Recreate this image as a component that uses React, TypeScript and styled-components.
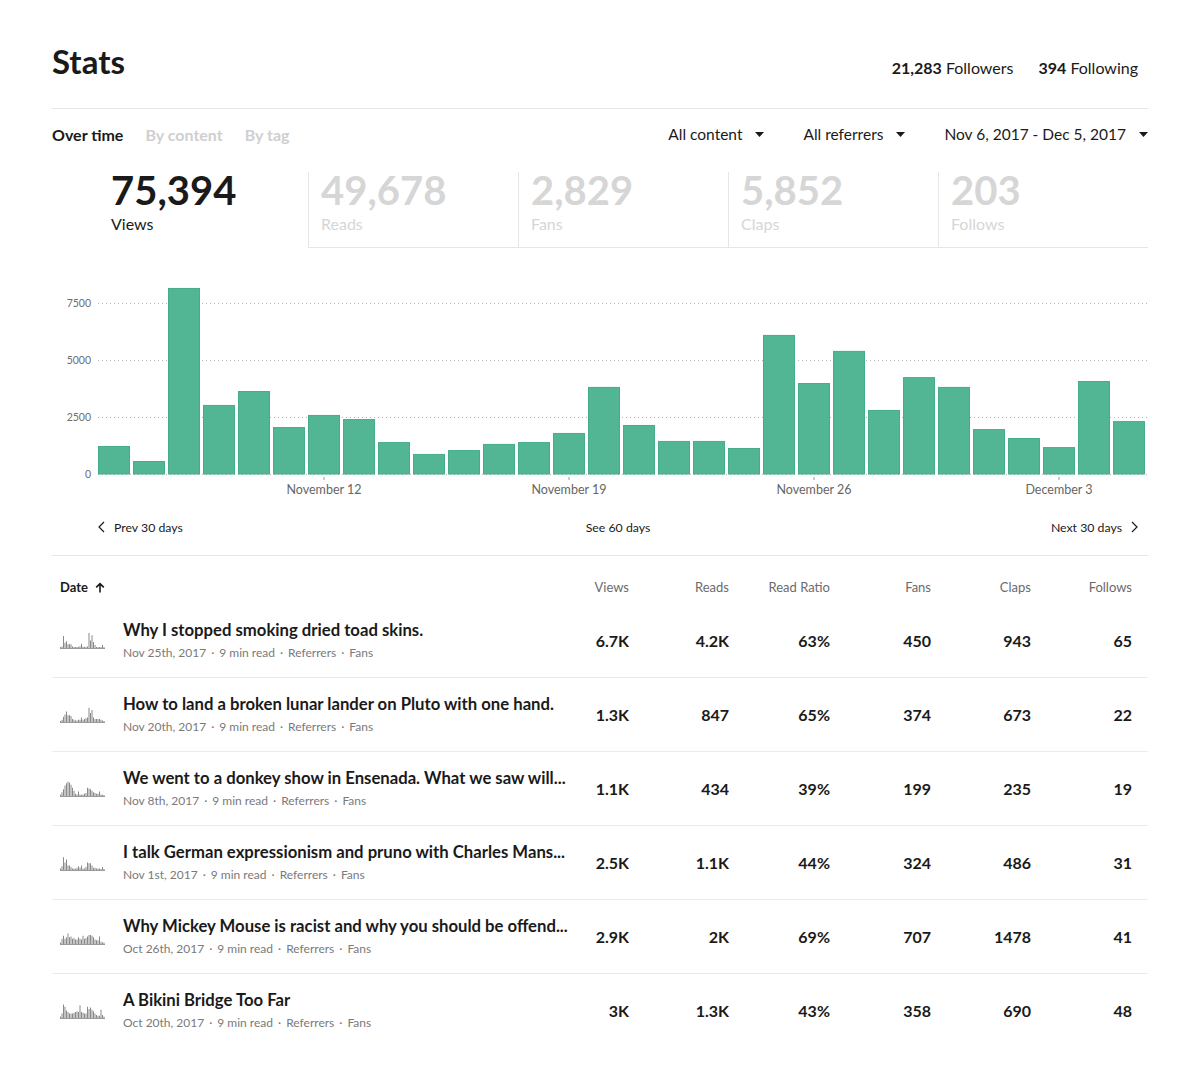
import React from "react";
import styled, { createGlobalStyle } from "styled-components";

const GlobalStyle = createGlobalStyle`
  html, body { margin: 0; padding: 0; background: #fff; }
  body {
    font-family: Lato, "Open Sans", sans-serif;
    color: #1a1a1a;
    -webkit-font-smoothing: antialiased;
  }
`;

const Page = styled.div`
  width: 1096px;
  padding: 0 52px 28px;
`;

/* ---------- header ---------- */

const Header = styled.header`
  display: flex;
  justify-content: space-between;
  align-items: baseline;
  padding-top: 41px;
  height: 67px;
  border-bottom: 1px solid #e6e6e6;
`;

const Title = styled.h1`
  margin: 0;
  font-size: 33px;
  line-height: 40px;
  font-weight: 700;
`;

const Follow = styled.div`
  display: flex;
  gap: 25px;
  margin-right: 10px;
  font-size: 16px;
  line-height: 20px;
  b { font-weight: 700; }
`;

/* ---------- toolbar ---------- */

const Toolbar = styled.div`
  display: flex;
  justify-content: space-between;
  align-items: center;
  height: 50px;
`;

const Tabs = styled.nav`
  display: flex;
  gap: 22px;
`;

const Tab = styled.span<{ $active?: boolean }>`
  font-size: 16px;
  font-weight: 700;
  color: ${(p) => (p.$active ? "#1a1a1a" : "#cfcfcf")};
`;

const Filters = styled.div`
  display: flex;
  gap: 39px;
`;

const Filter = styled.div`
  display: flex;
  align-items: center;
  gap: 13px;
  font-size: 15.5px;
`;

const Caret = () => (
  <svg width="9" height="5" viewBox="0 0 9 5">
    <path d="M0 0h9L4.5 5z" fill="#1a1a1a" />
  </svg>
);

/* ---------- summary tiles ---------- */

const Tiles = styled.div`
  display: flex;
  margin: 13px 0 0 46px;
`;

const Tile = styled.div<{ $active?: boolean }>`
  width: 210px;
  box-sizing: border-box;
  padding: 0 12px 13px;
  border-left: 1px solid ${(p) => (p.$active ? "transparent" : "#e6e6e6")};
  border-bottom: 1px solid ${(p) => (p.$active ? "transparent" : "#e6e6e6")};
  color: ${(p) => (p.$active ? "#1a1a1a" : "#d6d6d6")};
`;

const TileValue = styled.div`
  font-size: 40px;
  line-height: 36px;
  font-weight: 700;
`;

const TileLabel = styled.div`
  margin-top: 6px;
  font-size: 16px;
  line-height: 20px;
`;

/* ---------- chart ---------- */

const ChartSvg = styled.svg`
  display: block;
  margin-top: 14px;
  font-family: Lato, "Open Sans", sans-serif;
`;

const NavRow = styled.div`
  display: grid;
  grid-template-columns: 1fr auto 1fr;
  align-items: center;
  height: 40px;
  padding: 0 10px 8px 46px;
  border-bottom: 1px solid #e6e6e6;
  font-size: 12.3px;
`;

const NavLink = styled.span<{ $end?: boolean }>`
  display: flex;
  align-items: center;
  gap: 9px;
  justify-self: ${(p) => (p.$end ? "end" : "start")};
`;

const Chevron = ({ dir }: { dir: "left" | "right" }) => (
  <svg width="7" height="12" viewBox="0 0 7 12">
    <polyline
      points={dir === "left" ? "6,1 1,6 6,11" : "1,1 6,6 1,11"}
      fill="none"
      stroke="#1a1a1a"
      strokeWidth="1.2"
    />
  </svg>
);

/* ---------- table ---------- */

const COLS = "1fr 56px 100px 101px 101px 100px 101px";

const HeadRow = styled.div`
  display: grid;
  grid-template-columns: ${COLS};
  padding: 23px 16px 9px 8px;
  font-size: 13px;
  line-height: 16px;
  color: #6b6b6b;
`;

const HeadDate = styled.span`
  display: flex;
  align-items: center;
  gap: 7px;
  font-weight: 700;
  color: #1a1a1a;
`;

const HeadCell = styled.span`
  text-align: right;
`;

const Row = styled.div<{ $last?: boolean }>`
  display: grid;
  grid-template-columns: ${COLS};
  align-items: center;
  height: 73px;
  padding: 0 16px 0 8px;
  border-bottom: 1px solid ${(p) => (p.$last ? "transparent" : "#ebebeb")};
`;

const Story = styled.div`
  display: flex;
  align-items: center;
  gap: 18px;
  min-width: 0;
`;

const StoryText = styled.div`
  min-width: 0;
  flex: 1;
`;

const StoryTitle = styled.div`
  font-size: 16.7px;
  line-height: 20px;
  font-weight: 700;
  white-space: nowrap;
  overflow: hidden;
  text-overflow: ellipsis;
`;

const Meta = styled.div`
  display: flex;
  gap: 5px;
  margin-top: 4px;
  font-size: 12px;
  line-height: 17px;
  color: #7a7a7a;
`;

const Num = styled.span`
  text-align: right;
  font-size: 16px;
  font-weight: 700;
`;

/* ---------- data ---------- */

const dailyViews = [
  1230, 570, 8160, 3030, 3640, 2060, 2590, 2410, 1400, 880, 1050, 1320, 1400,
  1800, 3820, 2150, 1450, 1450, 1140, 6100, 3990, 5400, 2810, 4250, 3820, 1970,
  1580, 1180, 4080, 2320,
];

const stories = [
  {
    title: "Why I stopped smoking dried toad skins.",
    date: "Nov 25th, 2017",
    nums: ["6.7K", "4.2K", "63%", "450", "943", "65"],
    spark: [0.05, 0.1, 0.8, 0.35, 0.45, 0.25, 0.25, 0.25, 0.1, 0.06, 0.05, 0.06, 0.08, 0.12, 0.28, 0.1, 0.06, 0.08, 0.1, 1, 0.5, 0.85, 0.4, 0.2, 0.06, 0.05, 0.05, 0.05, 0.2, 0.05],
  },
  {
    title: "How to land a broken lunar lander on Pluto with one hand.",
    date: "Nov 20th, 2017",
    nums: ["1.3K", "847", "65%", "374", "673", "22"],
    spark: [0.05, 0.15, 0.35, 0.5, 0.7, 0.45, 0.45, 0.4, 0.2, 0.15, 0.1, 0.1, 0.15, 0.15, 0.3, 0.15, 0.2, 0.25, 0.3, 0.95, 0.6, 0.8, 0.3, 0.2, 0.2, 0.2, 0.2, 0.15, 0.1, 0.05],
  },
  {
    title: "We went to a donkey show in Ensenada. What we saw will...",
    date: "Nov 8th, 2017",
    nums: ["1.1K", "434", "39%", "199", "235", "19"],
    spark: [0.1, 0.25, 0.45, 0.7, 0.85, 0.95, 0.9, 0.75, 0.55, 0.35, 0.15, 0.1, 0.3, 0.1, 0.08, 0.1, 0.15, 0.2, 0.55, 0.5, 0.45, 0.35, 0.25, 0.2, 0.15, 0.15, 0.3, 0.1, 0.08, 0.05],
  },
  {
    title: "I talk German expressionism and pruno with Charles Mans...",
    date: "Nov 1st, 2017",
    nums: ["2.5K", "1.1K", "44%", "324", "486", "31"],
    spark: [0.1, 0.25, 0.85, 0.5, 0.7, 0.3, 0.3, 0.2, 0.1, 0.1, 0.08, 0.15, 0.25, 0.15, 0.3, 0.1, 0.1, 0.2, 0.5, 0.45, 0.45, 0.3, 0.15, 0.15, 0.1, 0.1, 0.1, 0.05, 0.2, 0.05],
  },
  {
    title: "Why Mickey Mouse is racist and why you should be offend...",
    date: "Oct 26th, 2017",
    nums: ["2.9K", "2K", "69%", "707", "1478", "41"],
    spark: [0.1, 0.35, 0.55, 0.35, 0.45, 0.7, 0.45, 0.5, 0.35, 0.4, 0.3, 0.3, 0.45, 0.35, 0.3, 0.55, 0.35, 0.4, 0.5, 0.6, 0.6, 0.55, 0.45, 0.3, 0.25, 0.25, 0.5, 0.15, 0.1, 0.1],
  },
  {
    title: "A Bikini Bridge Too Far",
    date: "Oct 20th, 2017",
    nums: ["3K", "1.3K", "43%", "358", "690", "48"],
    spark: [0.1, 0.3, 0.9, 0.75, 0.5, 0.4, 0.3, 0.3, 0.3, 0.35, 0.4, 0.45, 0.4, 0.85, 0.4, 0.35, 0.3, 0.3, 0.75, 0.6, 0.7, 0.55, 0.45, 0.3, 0.2, 0.15, 0.15, 0.55, 0.2, 0.1],
  },
];

/* ---------- drawings ---------- */

const Sparkline = ({ values }: { values: number[] }) => (
  <svg width="45" height="17" viewBox="0 0 45 17" style={{ flex: "none" }}>
    {values.map((v, i) => {
      const h = Math.max(1, v * 15);
      return <rect key={i} x={i * 1.5} y={16 - h} width="1" height={h} fill="#8a8a8a" />;
    })}
    <rect x="0" y="16" width="45" height="1" fill="#9a9a9a" />
  </svg>
);

const ArrowUp = () => (
  <svg width="10" height="11" viewBox="0 0 10 11">
    <path d="M5 10.5V1.8M1.2 5.4L5 1.6l3.8 3.8" fill="none" stroke="#1a1a1a" strokeWidth="1.6" />
  </svg>
);

const PLOT_X = 46;
const STEP = 35;
const BAR_W = 32;
const BASE_Y = 212;
const SCALE = 57 / 2500;

const ViewsChart = () => {
  const grid = [7500, 5000, 2500, 0];
  const ticks = [
    { i: 6, label: "November 12" },
    { i: 13, label: "November 19" },
    { i: 20, label: "November 26" },
    { i: 27, label: "December 3" },
  ];
  return (
    <ChartSvg width="1096" height="245" viewBox="0 0 1096 245">
      {grid.map((g) => {
        const y = BASE_Y - g * SCALE;
        return (
          <g key={g}>
            <line x1={PLOT_X} x2={1096} y1={y + 0.5} y2={y + 0.5} stroke="#b5b5b5" strokeDasharray="1 3" />
            <text x={39} y={y + 4} textAnchor="end" fontSize="10.5" fill="#6e6e6e">
              {g}
            </text>
          </g>
        );
      })}
      {dailyViews.map((v, i) => {
        const h = v * SCALE;
        return (
          <rect
            key={i}
            x={PLOT_X + i * STEP + 0.5}
            y={BASE_Y - h + 0.5}
            width={BAR_W - 1}
            height={h - 0.5}
            fill="#52b695"
            stroke="#45ad8a"
            strokeWidth="1"
          />
        );
      })}
      {ticks.map((t) => {
        const x = PLOT_X + t.i * STEP + BAR_W / 2;
        return (
          <g key={t.label}>
            <line x1={x} x2={x} y1={215} y2={218} stroke="#999" />
            <text x={x} y={231.5} textAnchor="middle" fontSize="12.5" fill="#666">
              {t.label}
            </text>
          </g>
        );
      })}
    </ChartSvg>
  );
};

/* ---------- page ---------- */

const tiles = [
  { value: "75,394", label: "Views", active: true },
  { value: "49,678", label: "Reads" },
  { value: "2,829", label: "Fans" },
  { value: "5,852", label: "Claps" },
  { value: "203", label: "Follows" },
];

export default function App() {
  return (
    <>
      <GlobalStyle />
      <Page>
        <Header>
          <Title>Stats</Title>
          <Follow>
            <span>
              <b>21,283</b> Followers
            </span>
            <span>
              <b>394</b> Following
            </span>
          </Follow>
        </Header>

        <Toolbar>
          <Tabs>
            <Tab $active>Over time</Tab>
            <Tab>By content</Tab>
            <Tab>By tag</Tab>
          </Tabs>
          <Filters>
            <Filter>
              All content <Caret />
            </Filter>
            <Filter>
              All referrers <Caret />
            </Filter>
            <Filter>
              Nov 6, 2017 - Dec 5, 2017 <Caret />
            </Filter>
          </Filters>
        </Toolbar>

        <Tiles>
          {tiles.map((t) => (
            <Tile key={t.label} $active={t.active}>
              <TileValue>{t.value}</TileValue>
              <TileLabel>{t.label}</TileLabel>
            </Tile>
          ))}
        </Tiles>

        <ViewsChart />

        <NavRow>
          <NavLink>
            <Chevron dir="left" /> Prev 30 days
          </NavLink>
          <span>See 60 days</span>
          <NavLink $end>
            Next 30 days <Chevron dir="right" />
          </NavLink>
        </NavRow>

        <HeadRow>
          <HeadDate>
            Date <ArrowUp />
          </HeadDate>
          <HeadCell>Views</HeadCell>
          <HeadCell>Reads</HeadCell>
          <HeadCell>Read Ratio</HeadCell>
          <HeadCell>Fans</HeadCell>
          <HeadCell>Claps</HeadCell>
          <HeadCell>Follows</HeadCell>
        </HeadRow>

        {stories.map((s, idx) => (
          <Row key={s.title} $last={idx === stories.length - 1}>
            <Story>
              <Sparkline values={s.spark} />
              <StoryText>
                <StoryTitle>{s.title}</StoryTitle>
                <Meta>
                  <span>{s.date}</span>
                  <span>·</span>
                  <span>9 min read</span>
                  <span>·</span>
                  <span>Referrers</span>
                  <span>·</span>
                  <span>Fans</span>
                </Meta>
              </StoryText>
            </Story>
            {s.nums.map((n, i) => (
              <Num key={i}>{n}</Num>
            ))}
          </Row>
        ))}
      </Page>
    </>
  );
}
